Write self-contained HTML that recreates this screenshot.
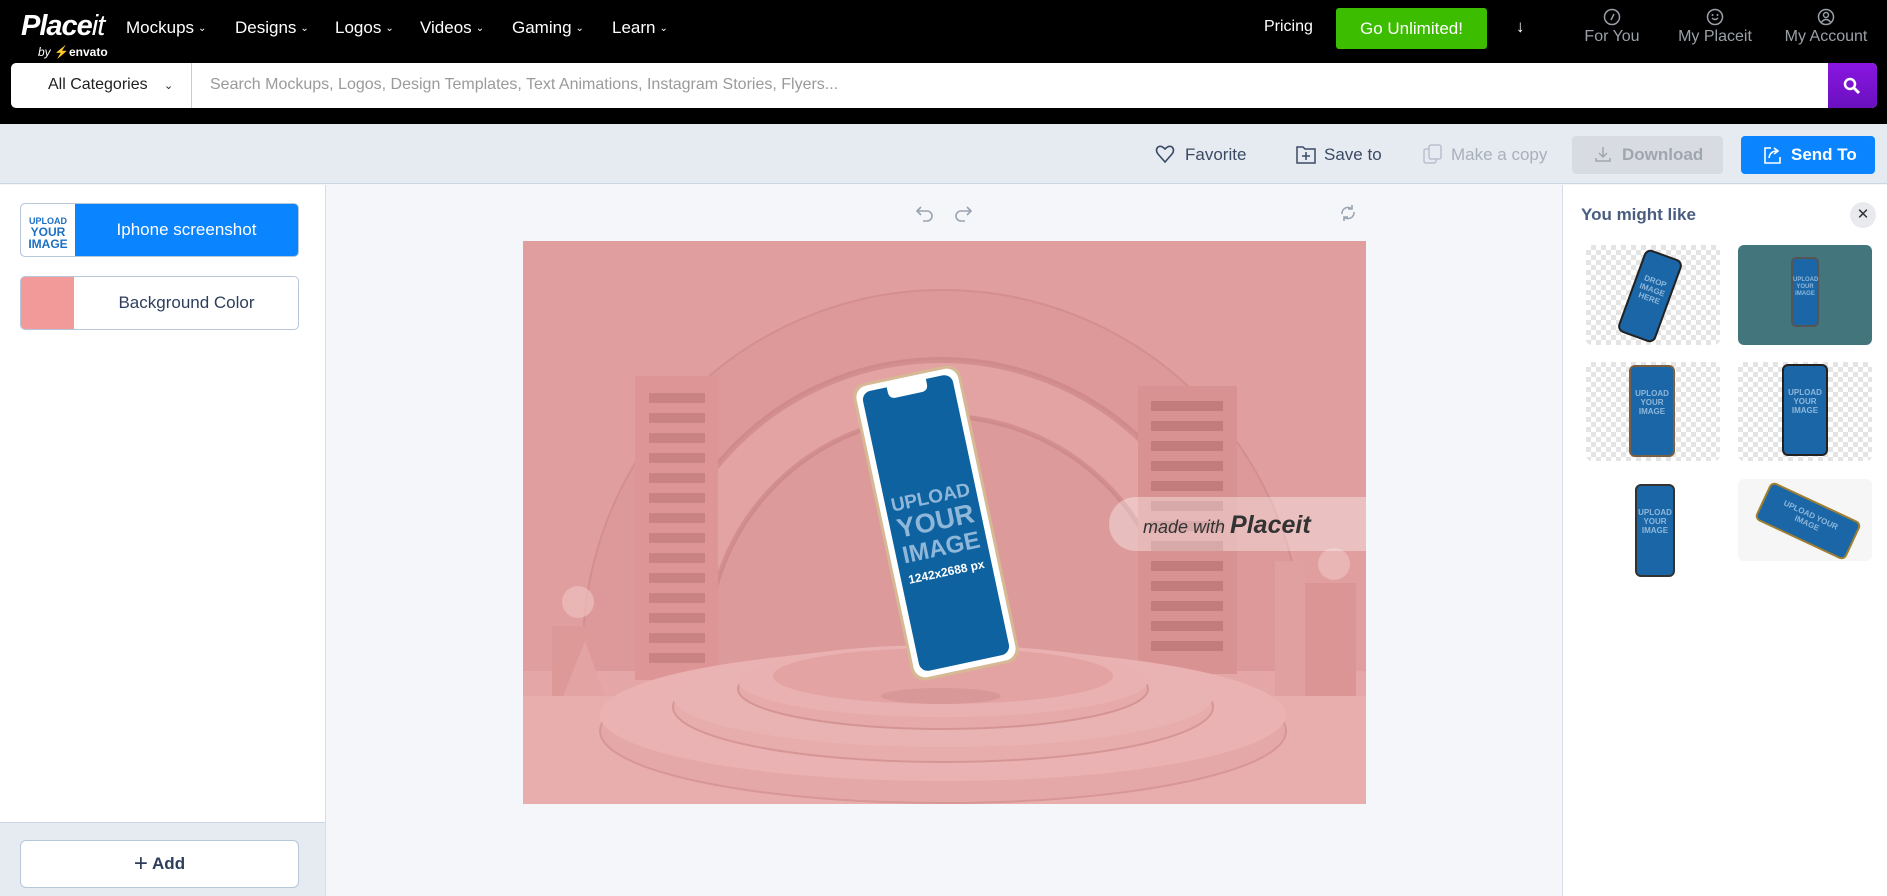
<!DOCTYPE html>
<html><head><meta charset="utf-8"><style>
*{box-sizing:border-box;margin:0;padding:0}
body{width:1887px;height:896px;overflow:hidden;font-family:"Liberation Sans",sans-serif;background:#f4f6fa;position:relative}
.abs{position:absolute}
.top{left:0;top:0;width:1887px;height:124px;background:#000}
.nav{color:#fff;font-size:17px;top:18px}
.nav span{font-size:10px;margin-left:4px;position:relative;top:-2px}
.ico{color:#9aa0a8;font-size:16px;text-align:center;width:110px}
.tb{color:#3a4a64;font-size:17px;top:145px}
.ph{position:absolute;background:#1a66a6;border:2px solid #222;color:#8fb7da;font-weight:bold;text-align:center;font-size:8px;line-height:9px;padding-top:22px}
</style></head><body>
<div class="abs top"></div>
<div class="abs" style="left:21px;top:10px;color:#fff;font:italic bold 29px 'Liberation Sans',sans-serif;letter-spacing:-1px">Place<span style="font-weight:normal">it</span></div>
<div class="abs" style="left:38px;top:45px;color:#fff;font-size:12px;font-weight:bold"><i style="font-weight:normal">by</i> <span style="color:#82b541">⚡</span>envato</div>
<div class="abs nav" style="left:126px">Mockups<span>⌄</span></div>
<div class="abs nav" style="left:235px">Designs<span>⌄</span></div>
<div class="abs nav" style="left:335px">Logos<span>⌄</span></div>
<div class="abs nav" style="left:420px">Videos<span>⌄</span></div>
<div class="abs nav" style="left:512px">Gaming<span>⌄</span></div>
<div class="abs nav" style="left:612px">Learn<span>⌄</span></div>
<div class="abs nav" style="left:1264px;font-size:16px">Pricing</div>
<div class="abs" style="left:1336px;top:8px;width:151px;height:41px;background:#3dbd00;border-radius:3px;color:#fff;font-size:17px;text-align:center;line-height:41px">Go Unlimited!</div>
<div class="abs" style="left:1516px;top:17px;color:#fff;font-size:17px">↓</div>
<svg class="abs" style="left:1603px;top:8px" width="18" height="18" viewBox="0 0 18 18"><circle cx="9" cy="9" r="7.5" fill="none" stroke="#9aa0a8" stroke-width="1.5"/><path d="M11 6L8 12" stroke="#9aa0a8" stroke-width="1.5"/></svg>
<svg class="abs" style="left:1706px;top:8px" width="18" height="18" viewBox="0 0 18 18"><circle cx="9" cy="9" r="7.5" fill="none" stroke="#9aa0a8" stroke-width="1.5"/><path d="M6 10q3 3 6 0" fill="none" stroke="#9aa0a8" stroke-width="1.3"/><circle cx="6.5" cy="7" r="1" fill="#9aa0a8"/><circle cx="11.5" cy="7" r="1" fill="#9aa0a8"/></svg>
<svg class="abs" style="left:1817px;top:8px" width="18" height="18" viewBox="0 0 18 18"><circle cx="9" cy="9" r="7.5" fill="none" stroke="#9aa0a8" stroke-width="1.5"/><circle cx="9" cy="7" r="2.5" fill="none" stroke="#9aa0a8" stroke-width="1.4"/><path d="M4.5 14q4.5-5 9 0" fill="none" stroke="#9aa0a8" stroke-width="1.4"/></svg>
<div class="abs ico" style="left:1557px;top:28px">For You</div>
<div class="abs ico" style="left:1660px;top:28px">My Placeit</div>
<div class="abs ico" style="left:1771px;top:28px">My Account</div>
<div class="abs" style="left:11px;top:63px;width:1866px;height:45px;background:#fff;border-radius:5px"></div>
<div class="abs" style="left:48px;top:76px;font-size:16px;color:#222">All Categories <span style="margin-left:12px;font-size:11px">⌄</span></div>
<div class="abs" style="left:191px;top:63px;width:1px;height:45px;background:#ccc"></div>
<div class="abs" style="left:210px;top:76px;font-size:16px;color:#9a9a9a">Search Mockups, Logos, Design Templates, Text Animations, Instagram Stories, Flyers...</div>
<div class="abs" style="left:1828px;top:63px;width:49px;height:45px;background:linear-gradient(#8a16e0,#6a10c0);border-radius:0 5px 5px 0"></div>
<svg class="abs" style="left:1842px;top:76px" width="20" height="20" viewBox="0 0 20 20"><circle cx="8" cy="8" r="5" fill="none" stroke="#fff" stroke-width="2.5"/><path d="M12 12l5 5" stroke="#fff" stroke-width="3"/></svg>
<!-- toolbar -->
<div class="abs" style="left:0;top:124px;width:1887px;height:60px;background:#e6ebf2;border-bottom:1px solid #cdd7e4"></div>
<svg class="abs" style="left:1155px;top:144px" width="20" height="20" viewBox="0 0 20 20"><path d="M10 18L3 10Q0 6 3 3Q6 1 10 5Q14 1 17 3Q20 6 17 10Z" fill="none" stroke="#3a4a64" stroke-width="1.6"/></svg>
<div class="abs tb" style="left:1185px">Favorite</div>
<svg class="abs" style="left:1295px;top:143px" width="22" height="22" viewBox="0 0 22 22"><path d="M2 4h6l2 2h10v14H2z" fill="none" stroke="#3a4a64" stroke-width="1.5"/><path d="M11 9v8M7 13h8" stroke="#3a4a64" stroke-width="1.5"/></svg>
<div class="abs tb" style="left:1324px">Save to</div>
<svg class="abs" style="left:1422px;top:143px" width="22" height="22" viewBox="0 0 22 22"><rect x="2" y="6" width="12" height="14" rx="2" fill="#e6ebf2" stroke="#b8c0cc" stroke-width="1.5"/><rect x="7" y="2" width="12" height="14" rx="2" fill="#e6ebf2" stroke="#b8c0cc" stroke-width="1.5"/></svg>
<div class="abs tb" style="left:1451px;color:#a8b0bc">Make a copy</div>
<div class="abs" style="left:1572px;top:136px;width:151px;height:38px;background:#d8dce2;border-radius:4px;color:#a0a6b0;font-size:17px;line-height:38px;padding-left:50px;font-weight:bold">Download</div>
<svg class="abs" style="left:1594px;top:145px" width="18" height="18" viewBox="0 0 18 18"><path d="M9 2v10M5 8l4 4 4-4M2 13v3h14v-3" fill="none" stroke="#a0a6b0" stroke-width="1.5"/></svg>
<div class="abs" style="left:1741px;top:136px;width:134px;height:38px;background:#0a84ff;border-radius:4px;color:#fff;font-size:17px;line-height:38px;padding-left:50px;font-weight:bold">Send To</div>
<svg class="abs" style="left:1762px;top:145px" width="20" height="20" viewBox="0 0 20 20"><path d="M9 3H3v15h15v-6" fill="none" stroke="#fff" stroke-width="1.6"/><path d="M7 13q1-7 8-7M12 3l4 3-4 3" fill="none" stroke="#fff" stroke-width="1.6"/></svg>
<!-- left panel -->
<div class="abs" style="left:0;top:185px;width:326px;height:711px;background:#fff;border-right:1px solid #d6dde8"></div>
<div class="abs" style="left:20px;top:203px;width:279px;height:54px;border:1px solid #b8c6da;border-radius:5px;overflow:hidden;background:#0a84ff">
 <div style="position:absolute;left:0;top:0;width:54px;height:54px;background:#fff;color:#1b6fc4;font-weight:bold;font-size:9px;line-height:10px;text-align:center;padding-top:12px">UPLOAD<br><span style="font-size:12px;line-height:12px">YOUR<br>IMAGE</span></div>
 <div style="position:absolute;left:54px;right:0;top:0;height:52px;line-height:52px;text-align:center;color:#fff;font-size:17px">Iphone screenshot</div>
</div>
<div class="abs" style="left:20px;top:276px;width:279px;height:54px;border:1px solid #b8c6da;border-radius:5px;overflow:hidden;background:#fff">
 <div style="position:absolute;left:0;top:0;width:53px;height:54px;background:#f29a9a"></div>
 <div style="position:absolute;left:54px;right:0;top:0;height:52px;line-height:52px;text-align:center;color:#2c3e5c;font-size:17px">Background Color</div>
</div>
<div class="abs" style="left:0;top:822px;width:326px;height:74px;background:#e6ebf2;border-top:1px solid #cdd7e4;border-right:1px solid #d6dde8"></div>
<div class="abs" style="left:20px;top:840px;width:279px;height:48px;background:#fff;border:1px solid #b8c6da;border-radius:6px;text-align:center;line-height:46px;font-size:17px;color:#2c3e5c;font-weight:bold"><span style="font-size:24px;font-weight:normal;vertical-align:-2px">+</span> Add</div>
<!-- canvas icons -->
<svg class="abs" style="left:915px;top:203px" width="20" height="20" viewBox="0 0 20 20"><path d="M6 4L2 8l4 4M2 8h10a5 5 0 010 10H8" fill="none" stroke="#9aa3b0" stroke-width="1.6"/></svg>
<svg class="abs" style="left:953px;top:203px" width="20" height="20" viewBox="0 0 20 20"><path d="M14 4l4 4-4 4M18 8H8a5 5 0 000 10h4" fill="none" stroke="#9aa3b0" stroke-width="1.6"/></svg>
<svg class="abs" style="left:1338px;top:202px" width="20" height="22" viewBox="0 0 20 22"><path d="M4 12a6 6 0 0110-5M16 10a6 6 0 01-10 5M14 3v4h-4M6 19v-4h4" fill="none" stroke="#9aa3b0" stroke-width="1.6"/></svg>
<!-- scene -->
<svg class="abs" style="left:523px;top:241px" width="843" height="563" viewBox="0 0 843 563">
<rect width="843" height="563" fill="#e09e9e"/>
<circle cx="420" cy="409" r="360" fill="#dd9999"/>
<circle cx="420" cy="409" r="360" fill="none" stroke="#d48e8e" stroke-width="2"/>
<circle cx="418" cy="409" r="290" fill="#e3a3a3"/>
<circle cx="418" cy="409" r="290" fill="none" stroke="#c88080" stroke-width="6" opacity=".6"/>
<circle cx="418" cy="409" r="234" fill="#dc9a9a"/>
<circle cx="418" cy="409" r="234" fill="none" stroke="#c88080" stroke-width="5" opacity=".6"/>
<rect x="0" y="430" width="843" height="133" fill="#e4a6a6"/>
<rect x="112" y="135" width="83" height="304" fill="#dd9595"/>
<g fill="#c98383">
<rect x="126" y="152" width="56" height="10"/><rect x="126" y="172" width="56" height="10"/><rect x="126" y="192" width="56" height="10"/><rect x="126" y="212" width="56" height="10"/><rect x="126" y="232" width="56" height="10"/><rect x="126" y="252" width="56" height="10"/><rect x="126" y="272" width="56" height="10"/><rect x="126" y="292" width="56" height="10"/><rect x="126" y="312" width="56" height="10"/><rect x="126" y="332" width="56" height="10"/><rect x="126" y="352" width="56" height="10"/><rect x="126" y="372" width="56" height="10"/><rect x="126" y="392" width="56" height="10"/><rect x="126" y="412" width="56" height="10"/>
</g>
<rect x="615" y="145" width="99" height="288" fill="#d99292"/>
<g fill="#c27c7c">
<rect x="628" y="160" width="72" height="10"/><rect x="628" y="180" width="72" height="10"/><rect x="628" y="200" width="72" height="10"/><rect x="628" y="220" width="72" height="10"/><rect x="628" y="240" width="72" height="10"/><rect x="628" y="260" width="72" height="10"/><rect x="628" y="280" width="72" height="10"/><rect x="628" y="300" width="72" height="10"/><rect x="628" y="320" width="72" height="10"/><rect x="628" y="340" width="72" height="10"/><rect x="628" y="360" width="72" height="10"/><rect x="628" y="380" width="72" height="10"/><rect x="628" y="400" width="72" height="10"/>
</g>
<rect x="29" y="385" width="42" height="70" fill="#dd9898"/>
<path d="M40 455L62 400L82 455Z" fill="#e3a3a3"/>
<circle cx="55" cy="361" r="16" fill="#ebbaba" opacity=".8"/>
<rect x="780" y="342" width="53" height="127" fill="#db9595"/>
<rect x="752" y="320" width="30" height="150" fill="#e0a0a0"/>
<circle cx="811" cy="323" r="16" fill="#ebbaba" opacity=".8"/>
<rect x="0" y="455" width="843" height="108" fill="#e8aeae"/>
<ellipse cx="420" cy="490" rx="343" ry="72" fill="#e5a8a8" stroke="#d89696" stroke-width="2"/>
<ellipse cx="420" cy="474" rx="343" ry="66" fill="#eab2b2"/>
<ellipse cx="420" cy="466" rx="270" ry="55" fill="#e7acac" stroke="#d79696" stroke-width="2"/>
<ellipse cx="420" cy="456" rx="270" ry="50" fill="#eab3b3"/>
<ellipse cx="420" cy="448" rx="205" ry="40" fill="#e6aaaa" stroke="#d59494" stroke-width="2"/>
<ellipse cx="420" cy="440" rx="205" ry="36" fill="#e9b1b1"/>
<ellipse cx="420" cy="435" rx="170" ry="28" fill="#e3a3a3"/>
<ellipse cx="418" cy="455" rx="60" ry="8" fill="#cf8e8e" opacity=".5"/>
<g transform="translate(413,282) rotate(-12)">
<rect x="-55" y="-152" width="110" height="304" rx="14" fill="#d6b994"/>
<rect x="-52" y="-149" width="104" height="298" rx="12" fill="#fff"/>
<rect x="-46" y="-143" width="92" height="286" rx="9" fill="#0f62a0"/>
<path d="M-20 -144h40v6q0 7-7 7h-26q-7 0-7-7z" fill="#fff"/>
<text x="0" y="-20" text-anchor="middle" fill="#8fb7da" font-family="Liberation Sans" font-weight="bold" font-size="19">UPLOAD</text>
<text x="0" y="7" text-anchor="middle" fill="#8fb7da" font-family="Liberation Sans" font-weight="bold" font-size="27">YOUR</text>
<text x="0" y="33" text-anchor="middle" fill="#8fb7da" font-family="Liberation Sans" font-weight="bold" font-size="24">IMAGE</text>
<text x="0" y="54" text-anchor="middle" fill="#fff" font-family="Liberation Sans" font-weight="bold" font-size="12">1242x2688 px</text>
</g>
<rect x="586" y="256" width="290" height="54" rx="27" fill="#fff" opacity=".35"/>
<text x="620" y="292" fill="#333" font-family="Liberation Sans" font-style="italic" font-size="18">made with <tspan font-weight="bold" font-size="25">Placeit</tspan></text>
</svg>
<!-- right panel -->
<div class="abs" style="left:1562px;top:185px;width:325px;height:711px;background:#fff;border-left:1px solid #d6dde8"></div>
<div class="abs" style="left:1581px;top:205px;font-size:17px;color:#4a5d80;font-weight:bold">You might like</div>
<div class="abs" style="left:1850px;top:202px;width:26px;height:26px;border-radius:50%;background:#e8eaee;text-align:center;line-height:26px;font-size:15px;color:#333">✕</div>
<div class="abs" style="left:1586px;top:245px;width:134px;height:100px;border-radius:6px;background:repeating-conic-gradient(#e4e4e4 0 25%,#fff 0 50%) 0 0/10px 10px"></div>
<div class="ph" style="left:1630px;top:252px;width:40px;height:88px;border-radius:7px;transform:rotate(20deg)">DROP<br>IMAGE<br>HERE</div>
<div class="abs" style="left:1738px;top:245px;width:134px;height:100px;border-radius:6px;background:#43767c"></div>
<div class="ph" style="left:1791px;top:257px;width:28px;height:70px;border-radius:5px;border-color:#555;font-size:6px;line-height:7px;padding-top:18px">UPLOAD<br>YOUR<br>IMAGE</div>
<div class="abs" style="left:1586px;top:362px;width:134px;height:99px;border-radius:6px;background:repeating-conic-gradient(#e4e4e4 0 25%,#fff 0 50%) 0 0/10px 10px"></div>
<div class="ph" style="left:1629px;top:365px;width:46px;height:92px;border-radius:6px;border-color:#7a6040">UPLOAD<br>YOUR<br>IMAGE</div>
<div class="abs" style="left:1738px;top:362px;width:134px;height:99px;border-radius:6px;background:repeating-conic-gradient(#e4e4e4 0 25%,#fff 0 50%) 0 0/10px 10px"></div>
<div class="ph" style="left:1782px;top:364px;width:46px;height:92px;border-radius:6px">UPLOAD<br>YOUR<br>IMAGE</div>
<div class="ph" style="left:1635px;top:484px;width:40px;height:93px;border-radius:6px;border-color:#333">UPLOAD<br>YOUR<br>IMAGE</div>
<div class="abs" style="left:1738px;top:479px;width:134px;height:82px;border-radius:6px;background:#f6f6f6"></div>
<div class="ph" style="left:1758px;top:500px;width:100px;height:42px;border-radius:6px;border-color:#a08030;transform:rotate(25deg);padding-top:8px">UPLOAD YOUR<br>IMAGE</div>
</body></html>
